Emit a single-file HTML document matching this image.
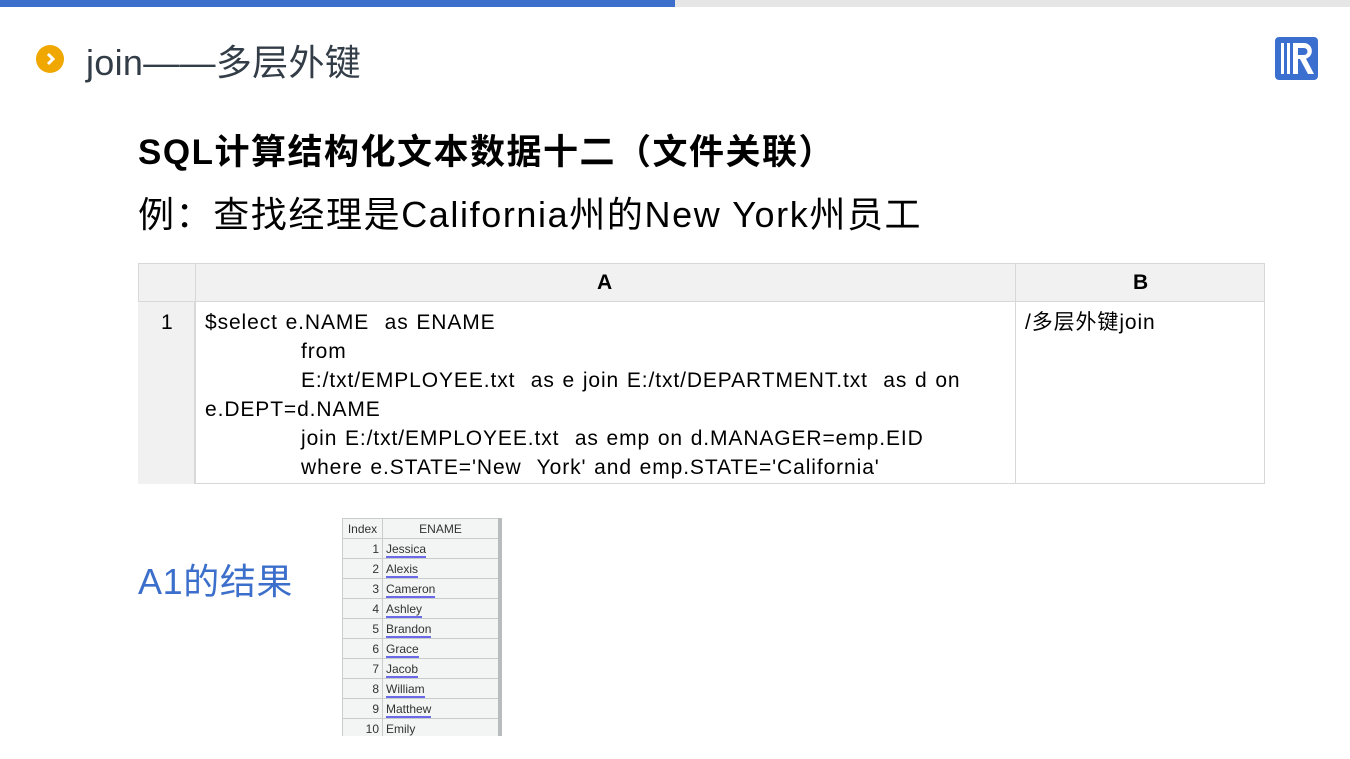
<!DOCTYPE html>
<html><head><meta charset="utf-8"><style>
*{margin:0;padding:0;box-sizing:border-box}
body{width:1350px;height:759px;background:#fff;position:relative;overflow:hidden;font-family:"Liberation Sans","Noto Sans CJK SC",sans-serif}
.a{position:absolute;white-space:nowrap}
.code{font-size:21px;color:#000;line-height:29px;letter-spacing:0.9px;word-spacing:1px}
table.r{position:absolute;left:342px;top:518px;border-collapse:collapse;font-size:12px;color:#333}
table.r td{border:1px solid #c8cccc;height:20px;background:#f3f4f4;padding:0 3px}
table.r td.i{width:40px;text-align:right}
table.r td.n{width:116px}
table.r td.n span{border-bottom:2px solid #6a6ae8}
</style></head><body>
<div class="a" style="left:0;top:0;width:675px;height:7px;background:#3c6fcb"></div>
<div class="a" style="left:675px;top:0;width:675px;height:7px;background:#e6e6e6"></div>
<div class="a" style="left:36px;top:45px;width:28px;height:28px;border-radius:50%;background:#f0a800"></div>
<svg class="a" style="left:36px;top:45px" width="28" height="28"><path d="M12 9 L17 14 L12 19" stroke="#fff" stroke-width="3" fill="none"/></svg>
<div class="a" style="left:86px;top:34px;font-size:36px;letter-spacing:0.3px;color:#333d47">join——多层外键</div>
<svg class="a" style="left:1275px;top:37px" width="43" height="43"><rect x="0" y="0" width="43" height="43" rx="4" fill="#3b6fcf"/><rect x="6" y="6" width="3" height="31" fill="#fff"/><rect x="12" y="6" width="3" height="31" fill="#fff"/><path d="M18 6 H29 a8 8 0 0 1 2 15.7 L39 37 H33 L25 22 H23 V37 H18 Z M23 11 V18 H29 a3.5 3.5 0 0 0 0 -7 Z" fill="#fff"/></svg>
<div class="a" style="left:138px;top:124px;font-size:35px;letter-spacing:1.5px;font-weight:bold;color:#000">SQL计算结构化文本数据十二（文件关联）</div>
<div class="a" style="left:138px;top:186px;font-size:36px;letter-spacing:1.6px;color:#000">例：查找经理是California州的New York州员工</div>
<div class="a" style="left:138px;top:263px;width:1127px;height:221px;border:1px solid #d8d8d8"></div>
<div class="a" style="left:138px;top:263px;width:1127px;height:39px;background:#f1f1f1;border:1px solid #d8d8d8"></div>
<div class="a" style="left:195px;top:263px;width:1px;height:221px;background:#d8d8d8"></div>
<div class="a" style="left:1015px;top:263px;width:1px;height:221px;background:#d8d8d8"></div>
<div class="a" style="left:138px;top:302px;width:57px;height:182px;background:#f1f1f1;border-right:1px solid #d8d8d8"></div>
<div class="a" style="left:597px;top:271px;font-size:21px;font-weight:bold">A</div>
<div class="a" style="left:1133px;top:271px;font-size:21px;font-weight:bold">B</div>
<div class="a code" style="left:161px;top:308px">1</div>
<div class="a code" style="left:205px;top:308px">$select e.NAME&nbsp; as ENAME<br>
<span style="padding-left:96px">from</span><br>
<span style="padding-left:96px">E:/txt/EMPLOYEE.txt&nbsp; as e join E:/txt/DEPARTMENT.txt&nbsp; as d on</span><br>
e.DEPT=d.NAME<br>
<span style="padding-left:96px">join E:/txt/EMPLOYEE.txt&nbsp; as emp on d.MANAGER=emp.EID</span><br>
<span style="padding-left:96px">where e.STATE='New&nbsp; York' and emp.STATE='California'</span></div>
<div class="a code" style="left:1025px;top:308px">/多层外键join</div>
<div class="a" style="left:138px;top:553px;font-size:36px;letter-spacing:0.6px;color:#3c6fcb">A1的结果</div>
<table class="r">
<tr><td class="i" style="text-align:center;padding:0">Index</td><td class="n" style="text-align:center">ENAME</td></tr>
<tr><td class="i">1</td><td class="n"><span>Jessica</span></td></tr>
<tr><td class="i">2</td><td class="n"><span>Alexis</span></td></tr>
<tr><td class="i">3</td><td class="n"><span>Cameron</span></td></tr>
<tr><td class="i">4</td><td class="n"><span>Ashley</span></td></tr>
<tr><td class="i">5</td><td class="n"><span>Brandon</span></td></tr>
<tr><td class="i">6</td><td class="n"><span>Grace</span></td></tr>
<tr><td class="i">7</td><td class="n"><span>Jacob</span></td></tr>
<tr><td class="i">8</td><td class="n"><span>William</span></td></tr>
<tr><td class="i">9</td><td class="n"><span>Matthew</span></td></tr>
<tr><td class="i">10</td><td class="n"><span>Emily</span></td></tr>
</table>
<div class="a" style="left:498px;top:518px;width:4px;height:218px;background:#b8bcbc"></div>
<div class="a" style="left:330px;top:736px;width:200px;height:23px;background:#fff"></div>
</body></html>
